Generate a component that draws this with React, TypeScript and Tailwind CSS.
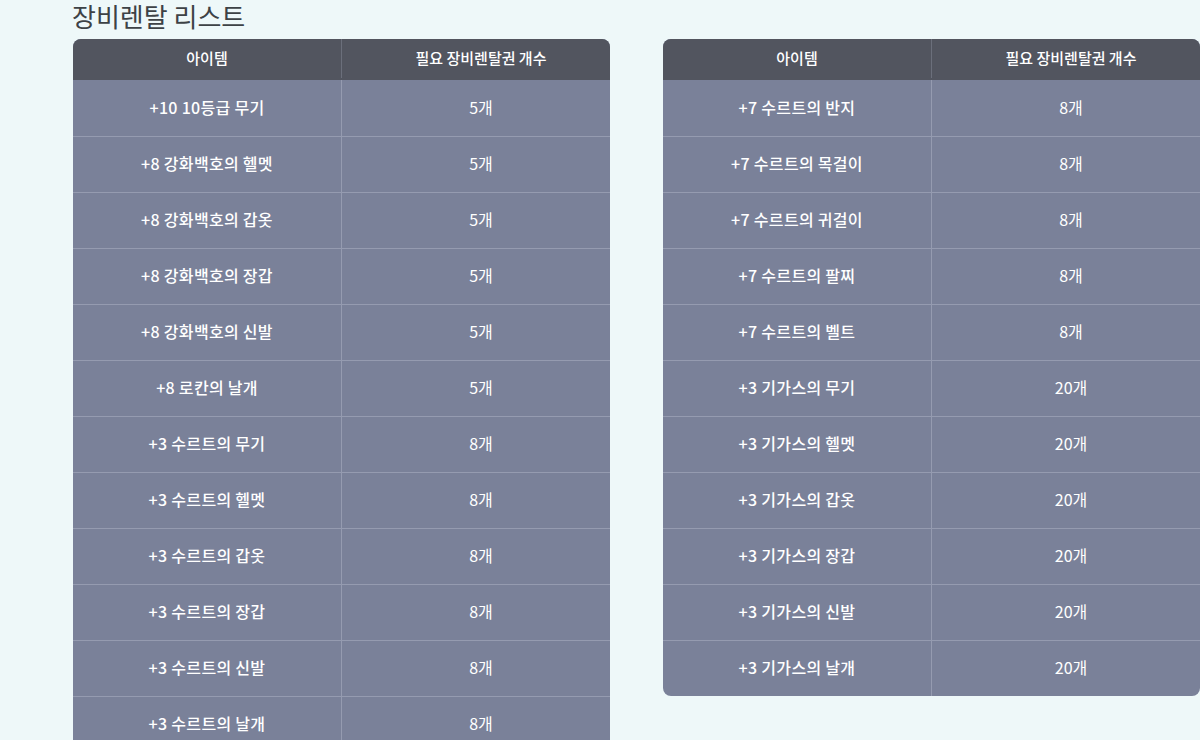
const left: [string, string][] = [
  ["+10 10등급 무기", "5개"],
  ["+8 강화백호의 헬멧", "5개"],
  ["+8 강화백호의 갑옷", "5개"],
  ["+8 강화백호의 장갑", "5개"],
  ["+8 강화백호의 신발", "5개"],
  ["+8 로칸의 날개", "5개"],
  ["+3 수르트의 무기", "8개"],
  ["+3 수르트의 헬멧", "8개"],
  ["+3 수르트의 갑옷", "8개"],
  ["+3 수르트의 장갑", "8개"],
  ["+3 수르트의 신발", "8개"],
  ["+3 수르트의 날개", "8개"],
];

const right: [string, string][] = [
  ["+7 수르트의 반지", "8개"],
  ["+7 수르트의 목걸이", "8개"],
  ["+7 수르트의 귀걸이", "8개"],
  ["+7 수르트의 팔찌", "8개"],
  ["+7 수르트의 벨트", "8개"],
  ["+3 기가스의 무기", "20개"],
  ["+3 기가스의 헬멧", "20개"],
  ["+3 기가스의 갑옷", "20개"],
  ["+3 기가스의 장갑", "20개"],
  ["+3 기가스의 신발", "20개"],
  ["+3 기가스의 날개", "20개"],
];

const RentalTable = ({ rows }: { rows: [string, string][] }) => {
  return (
    <div className="w-[537px] shrink-0 self-start overflow-hidden rounded-lg bg-[#7a8199] text-white">
      <div className="grid h-[41px] grid-cols-[269px_1fr] bg-[#52555f] pb-[2px] text-[15px] font-medium">
        <div className="flex items-center justify-center border-r border-[#6b6f7b]">아이템</div>
        <div className="flex items-center justify-center pl-[10px]">필요 장비렌탈권 개수</div>
      </div>
      {rows.map(([item, count], i) => (
        <div
          key={item}
          className={
            i === 0
              ? "grid h-[56px] grid-cols-[269px_1fr] text-[16px]"
              : "grid h-[56px] grid-cols-[269px_1fr] border-t border-[#959bb0] text-[16px]"
          }
        >
          <div className="flex items-center justify-center border-r border-[#959bb0] pb-[3px] font-medium tracking-[0.3px]">
            {item}
          </div>
          <div className="flex items-center justify-center pb-[3px] pl-[10px]">{count}</div>
        </div>
      ))}
    </div>
  );
};

export default function App() {
  return (
    <div
      className="h-[740px] w-[1200px] overflow-hidden bg-[#eef8f9]"
      style={{ fontFamily: '"Noto Sans CJK KR", "Noto Sans", sans-serif' }}
    >
      <div className="pl-[72px]">
        <h1 className="mb-[7px] text-[26px] leading-[32px] text-[#3d4246]">장비렌탈 리스트</h1>
        <div className="flex gap-[53px] pl-px">
          <RentalTable rows={left} />
          <RentalTable rows={right} />
        </div>
      </div>
    </div>
  );
}
